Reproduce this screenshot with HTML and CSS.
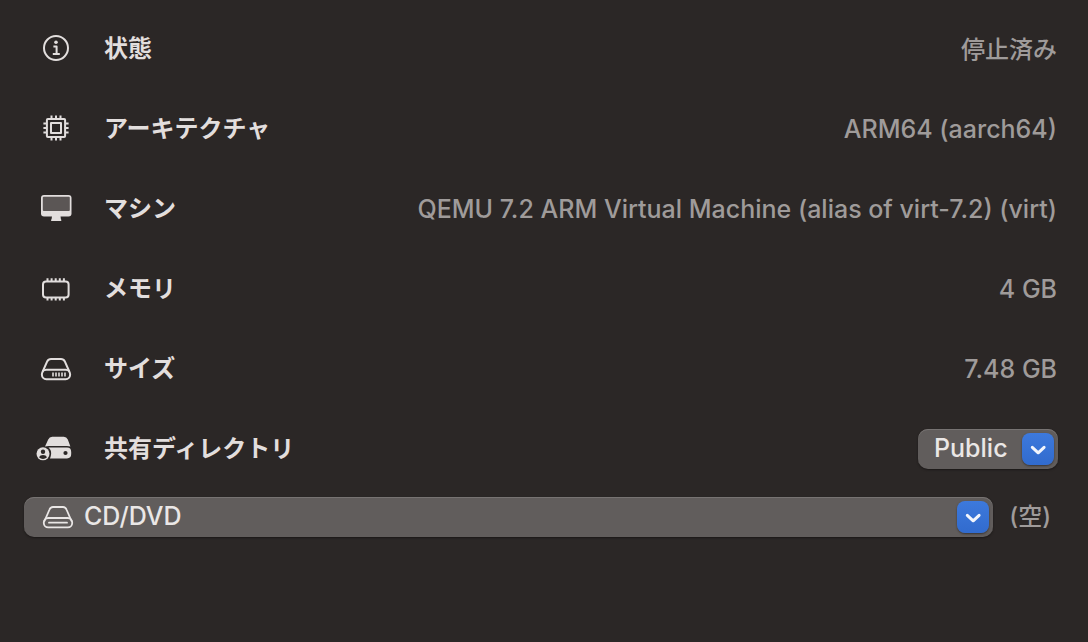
FILE: index.html
```html
<!DOCTYPE html>
<html lang="ja">
<head>
<meta charset="utf-8">
<meta name="viewport" content="width=device-width, initial-scale=1">
<title>仮想マシン</title>
<link rel="stylesheet" href="styles.css">
</head>
<body>
<main class="details">
  <div class="row">
    <svg class="icon" viewBox="0 0 40 40" aria-hidden="true"><circle cx="20" cy="20" r="12" class="line"/><circle cx="20" cy="14.2" r="1.8" class="fill"/><path class="line" d="M17.4 18.5h3.2v7.2M16.8 26h7"/></svg>
    <span class="label">状態</span>
    <span class="value value-ja">停止済み</span>
  </div>
  <div class="row">
    <svg class="icon" viewBox="0 0 40 40" aria-hidden="true"><rect class="line" x="10.9" y="10.9" width="18.2" height="18.2" rx="1"/><rect class="line" x="15" y="15" width="10" height="10"/><path class="line" d="M15.5 7.4V11M20 7.4V11M24.5 7.4V11M15.5 29v3.6M20 29v3.6M24.5 29v3.6M7.4 15.5H11M7.4 20H11M7.4 24.5H11M29 15.5h3.6M29 20h3.6M29 24.5h3.6"/></svg>
    <span class="label">アーキテクチャ</span>
    <span class="value">ARM64 (aarch64)</span>
  </div>
  <div class="row">
    <svg class="icon" viewBox="0 0 40 40" aria-hidden="true"><rect class="fill" x="5" y="7" width="30.5" height="21.5" rx="3"/><rect class="screen" x="6.8" y="8.8" width="27" height="14.2" rx="1"/><path class="fill" d="M16 28h8.5l.4 3.2q.4.2.4.8v.5q0 .5-.6.5h-9q-.6 0-.6-.5V32q0-.6.5-.8z"/></svg>
    <span class="label">マシン</span>
    <span class="value">QEMU 7.2 ARM Virtual Machine (alias of virt-7.2) (virt)</span>
  </div>
  <div class="row">
    <svg class="icon" viewBox="0 0 40 40" aria-hidden="true"><rect class="line" x="7" y="13.6" width="25.6" height="15.8" rx="3"/><path class="line" d="M11.5 10.2v3M15.6 10.2v3M19.7 10.2v3M23.8 10.2v3M27.9 10.2v3M11.5 29.5v3M15.6 29.5v3M19.7 29.5v3M23.8 29.5v3M27.9 29.5v3"/></svg>
    <span class="label">メモリ</span>
    <span class="value">4 GB</span>
  </div>
  <div class="row">
    <svg class="icon" viewBox="0 0 40 40" aria-hidden="true"><path class="line" d="M6.5 24 11.3 13.2Q12.4 10.9 15 10.9h10q2.6 0 3.7 2.3L33.5 24"/><rect class="line" x="5.9" y="21.8" width="28.2" height="9.4" rx="4.4"/><path class="tick" d="M17 24.4v4.2M20 24.4v4.2M23 24.4v4.2M26 24.4v4.2M29 24.4v4.2"/></svg>
    <span class="label">サイズ</span>
    <span class="value">7.48 GB</span>
  </div>
  <div class="row">
    <svg class="icon" viewBox="0 0 40 40" aria-hidden="true"><path class="fill" d="M9 18.4 12.2 11.4Q13.4 8.8 16.2 8.8h11.6q2.8 0 4 2.6l2.6 7Q33.2 17.9 31 17.9H13q-2.4 0-4 .5z"/><path class="fill" fill-rule="evenodd" d="M12.5 19.6H31q4.2 0 4.2 4.4v2q0 4.4-4.2 4.4H14q2-4.8.5-8.3-.7-1.5-2-2.5zM29.5 22.9a2.1 2.1 0 1 0 0 4.2 2.1 2.1 0 0 0 0-4.2z"/><circle class="fill" cx="7" cy="25.8" r="6.5"/><circle class="cut" cx="7" cy="23.8" r="2.2"/><path class="cut" d="M3 29.3q1-2.3 4-2.3t4 2.3q-1.7 1.7-4 1.7t-4-1.7z"/></svg>
    <label class="label" for="share">共有ディレクトリ</label>
    <span class="picker picker-share">
      <select id="share"><option>Public</option></select>
      <svg class="chevron" viewBox="0 0 32 32" aria-hidden="true"><path d="m10.3 14.3 5.9 5.5 5.9-5.5"/></svg>
    </span>
  </div>
  <div class="drive">
    <span class="picker picker-drive">
      <svg class="drive-icon" viewBox="0 0 40 40" aria-hidden="true"><path d="M6.5 24 11.3 13Q12.4 10 15 10h10q2.6 0 3.7 3L33.5 24"/><rect x="5.8" y="21" width="28.4" height="9.4" rx="4.4"/><path d="M11 25.7h18"/></svg>
      <select aria-label="ドライブ"><option>CD/DVD</option></select>
      <svg class="chevron" viewBox="0 0 32 32" aria-hidden="true"><path d="m10.3 14.3 5.9 5.5 5.9-5.5"/></svg>
    </span>
    <span class="drive-state">(空)</span>
  </div>
</main>
</body>
</html>
```

FILE: styles.css
```css
* { box-sizing: border-box; }
body {
  margin: 0;
  background: #2b2726;
  color: #e2dedd;
  font-family: Inter, "Noto Sans CJK JP", sans-serif;
  font-size: 25px;
  font-weight: 500;
}
.details { padding: 8px 0; }
.row {
  display: flex;
  align-items: center;
  min-height: 80px;
  padding: 0 31px 0 36px;
}
.icon {
  flex: none;
  width: 40px;
  height: 40px;
  margin-right: 28px;
  overflow: visible;
}
.line { fill: none; stroke: #e2dedd; stroke-width: 2; stroke-linejoin: round; }
.tick { fill: none; stroke: #e2dedd; stroke-width: 1.6; }
.fill { fill: #e2dedd; }
.cut { fill: #2b2726; }
.screen { fill: #5b5655; }
.label {
  padding-bottom: 2px;
  font-family: "Noto Sans CJK JP", sans-serif;
  font-size: 24px;
  font-weight: 700;
  line-height: 32px;
}
.value {
  margin-left: auto;
  padding-top: 2px;
  color: #9f9b9a;
  line-height: 32px;
  text-align: right;
}
.value-ja {
  padding-top: 0;
  font-family: "Noto Sans CJK JP", sans-serif;
  font-size: 24px;
}
.picker {
  display: flex;
  position: relative;
  border-radius: 10px;
  background: #615d5c;
  box-shadow: inset 0 1px 0 #777372, 0 1px 2px #1b1817;
}
.picker-share {
  margin: 2px -1px 0 auto;
}
.picker select {
  appearance: none;
  width: 100%;
  height: 40px;
  margin: 0;
  padding: 0 50px 2px 16px;
  border: 0;
  border-radius: 10px;
  background: transparent;
  color: #eae7e6;
  font: inherit;
}
.picker-drive { flex: 1; }
.picker-drive select { padding-left: 60px; }
.chevron {
  position: absolute;
  top: 4px;
  right: 4px;
  width: 32px;
  height: 32px;
  border-radius: 8px;
  background: linear-gradient(#3d79dc, #316bce);
  box-shadow: 0 1px 2px #383433;
  pointer-events: none;
}
.chevron path {
  fill: none;
  stroke: #f2f5fc;
  stroke-width: 3;
  stroke-linecap: round;
  stroke-linejoin: round;
}
.drive-icon {
  position: absolute;
  top: 0;
  left: 14px;
  width: 40px;
  height: 40px;
  pointer-events: none;
}
.drive-icon path, .drive-icon rect {
  fill: none;
  stroke: #eae7e6;
  stroke-width: 1.8;
  stroke-linecap: round;
}
.drive {
  display: flex;
  align-items: center;
  gap: 16px;
  padding: 9px 37px 0 24px;
}
.drive-state {
  color: #9f9b9a;
  font-size: 24px;
  line-height: 32px;
}
```
